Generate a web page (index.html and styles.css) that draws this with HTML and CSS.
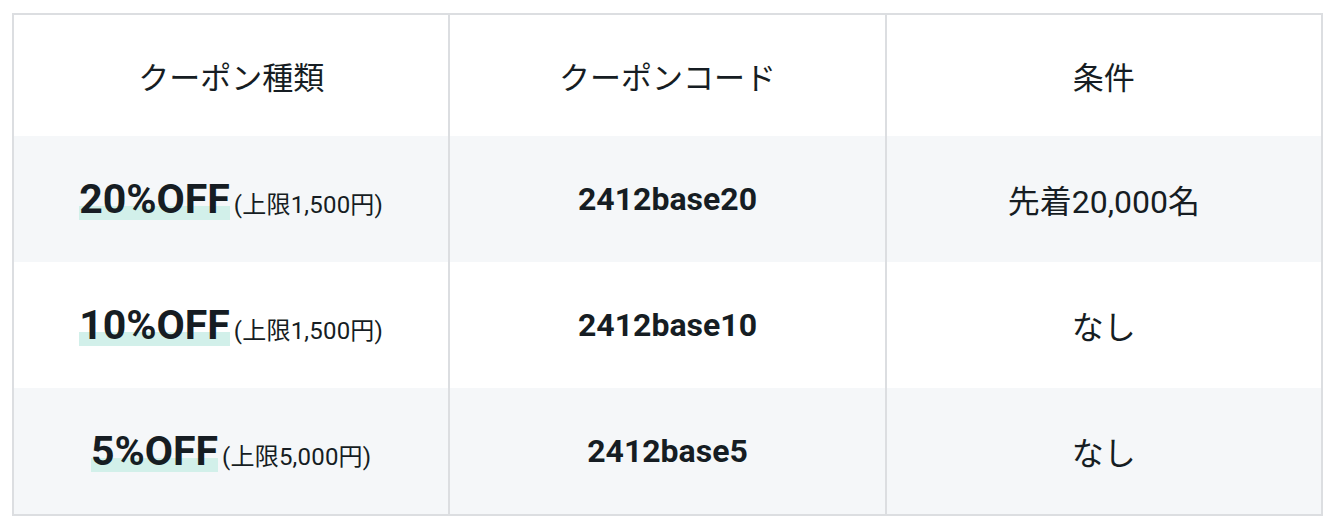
FILE: index.html
```html
<!DOCTYPE html>
<html lang="ja">
<head>
<meta charset="utf-8">
<link rel="stylesheet" href="styles.css">
</head>
<body>
<div class="wrap">
<table class="coupons">
  <thead>
    <tr><th>クーポン種類</th><th>クーポンコード</th><th>条件</th></tr>
  </thead>
  <tbody>
    <tr class="alt">
      <td><span class="off">20%OFF</span><span class="limit">(上限1,500円)</span></td>
      <td class="code">2412base20</td>
      <td>先着20,000名</td>
    </tr>
    <tr>
      <td><span class="off">10%OFF</span><span class="limit">(上限1,500円)</span></td>
      <td class="code">2412base10</td>
      <td>なし</td>
    </tr>
    <tr class="alt">
      <td><span class="off">5%OFF</span><span class="limit">(上限5,000円)</span></td>
      <td class="code">2412base5</td>
      <td>なし</td>
    </tr>
  </tbody>
</table>
</div>
</body>
</html>
```
FILE: styles.css
```css
html, body {
  margin: 0;
  padding: 0;
  background: #ffffff;
}
body {
  font-family: Roboto, "Noto Sans CJK JP", sans-serif;
  color: #161d23;
}
.wrap {
  padding: 13px 17px 0 12px;
}
.coupons {
  width: 1311px;
  border-collapse: collapse;
  table-layout: fixed;
  border: 2px solid #dcdee1;
}
.coupons th,
.coupons td {
  border-left: 2px solid #dcdee1;
  border-right: 2px solid #dcdee1;
  text-align: center;
  vertical-align: middle;
  padding: 0;
}
.coupons th {
  height: 121px;
  font-size: 31px;
  font-weight: 400;
}
.coupons td {
  height: 126px;
  font-size: 32px;
}
.coupons tr.alt td {
  background: #f5f7f9;
}
.code {
  font-weight: 700;
}
.off {
  font-size: 41px;
  font-weight: 700;
  background: linear-gradient(transparent 64%, #d2f0ea 64%, #d2f0ea 94%, transparent 94%);
}
.limit {
  font-size: 24px;
  margin-left: 4px;
  letter-spacing: 0.2px;
}
```
